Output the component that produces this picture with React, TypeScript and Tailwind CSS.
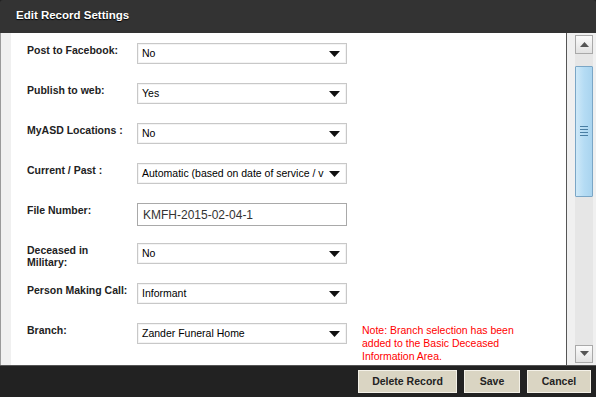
import React from 'react';

type Row = {
  label: string;
  kind: 'select' | 'input';
  value: string;
  note?: string;
};

const ROWS: Row[] = [
  { label: 'Post to Facebook:', kind: 'select', value: 'No' },
  { label: 'Publish to web:', kind: 'select', value: 'Yes' },
  { label: 'MyASD Locations :', kind: 'select', value: 'No' },
  { label: 'Current / Past :', kind: 'select', value: 'Automatic (based on date of service / v' },
  { label: 'File Number:', kind: 'input', value: 'KMFH-2015-02-04-1' },
  { label: 'Deceased in Military:', kind: 'select', value: 'No' },
  { label: 'Person Making Call:', kind: 'select', value: 'Informant' },
  {
    label: 'Branch:',
    kind: 'select',
    value: 'Zander Funeral Home',
    note: 'Note: Branch selection has been added to the Basic Deceased Information Area.',
  },
];

const FakeSelect: React.FC<{ value: string }> = ({ value }) => (
  <div className="w-[210px] h-[21px] border border-[#c8c8c8] bg-white flex items-center pl-[4px] pr-[6px] shadow-[inset_0_0_0_1px_#f4f4f4]">
    <span className="flex-1 text-[10.5px] text-black whitespace-nowrap">{value}</span>
    <svg width="11" height="6" viewBox="0 0 11 6" className="shrink-0 ml-[2px]">
      <path d="M0 0h11L5.5 6z" fill="#111" />
    </svg>
  </div>
);

const ScrollArrow: React.FC<{ up?: boolean }> = ({ up }) => (
  <div className="w-[18px] h-[19px] border border-[#a9a9a9] bg-gradient-to-b from-[#fbfbfb] to-[#e2e2e2] flex items-center justify-center">
    <svg width="9" height="5" viewBox="0 0 9 5">
      <path d={up ? 'M0 5h9L4.5 0z' : 'M0 0h9L4.5 5z'} fill="#555" />
    </svg>
  </div>
);

const FooterButton: React.FC<{ label: string; width: string }> = ({ label, width }) => (
  <button
    className={`${width} h-[23px] bg-[#dad5c3] border border-[#f4f1e8] text-[10.5px] font-bold text-[#222] flex items-center justify-center`}
  >
    {label}
  </button>
);

export default function App() {
  return (
    <div className="w-[596px] h-[397px] flex flex-col bg-[#222] font-['Liberation_Sans',Arial,sans-serif] overflow-hidden">
      {/* Header */}
      <div className="h-[33px] shrink-0 bg-[#333] rounded-t-[3px] flex items-center pl-[16px] pb-[2px]">
        <span className="text-white text-[11.5px] font-bold [text-shadow:0_1px_1px_#000]">Edit Record Settings</span>
      </div>

      {/* Body */}
      <div className="h-[333px] shrink-0 flex border-b border-[#555]">
        <div className="w-[11px] bg-[#f0f0f0] border-l border-[#9a9a9a]" />
        <div className="flex-1 bg-white pt-[10px] overflow-hidden">
          {ROWS.map(row => (
            <div key={row.label} className="h-[40px] flex items-start">
              <div className="w-[126px] pl-[16px] pt-[1px] text-[10.5px] font-bold text-[#222] leading-[12px]">
                {row.label.includes('Military') ? (
                  <>
                    Deceased in
                    <br />
                    Military:
                  </>
                ) : (
                  row.label
                )}
              </div>
              {row.kind === 'select' ? (
                <FakeSelect value={row.value} />
              ) : (
                <div className="w-[210px] h-[23px] border border-[#a9a9a9] bg-white flex items-center pl-[5px] text-[12px] text-[#333]">
                  {row.value}
                </div>
              )}
              {row.note && (
                <div className="w-[170px] ml-[15px] pt-[1px] text-[10.5px] leading-[13px] text-[#f00]">{row.note}</div>
              )}
            </div>
          ))}
        </div>
        <div className="w-[1px] bg-[#555]" />
        {/* Scrollbar */}
        <div className="w-[29px] bg-[#f0f0f0] flex flex-col pl-[8px] pt-[2px]">
          <ScrollArrow up />
          <div className="w-[18px] flex-1 bg-[#e6e6e6] pt-[12px] pb-[148px] my-0">
            <div className="h-[131px] border border-[#7aa6c6] bg-gradient-to-r from-[#cfe9f8] via-[#b5dcf4] to-[#a9d4ef] rounded-[1px] flex items-center justify-center">
              <div className="flex flex-col gap-[2px]">
                <div className="w-[8px] h-[1px] bg-[#4a7ea3]" />
                <div className="w-[8px] h-[1px] bg-[#4a7ea3]" />
                <div className="w-[8px] h-[1px] bg-[#4a7ea3]" />
                <div className="w-[8px] h-[1px] bg-[#4a7ea3]" />
              </div>
            </div>
          </div>
          <ScrollArrow />
          <div className="h-[2px]" />
        </div>
      </div>

      {/* Footer */}
      <div className="flex-1 bg-[#222] flex items-center justify-end gap-[7px] pr-[5px]">
        <FooterButton label="Delete Record" width="w-[99px]" />
        <FooterButton label="Save" width="w-[56px]" />
        <FooterButton label="Cancel" width="w-[64px]" />
      </div>
    </div>
  );
}
